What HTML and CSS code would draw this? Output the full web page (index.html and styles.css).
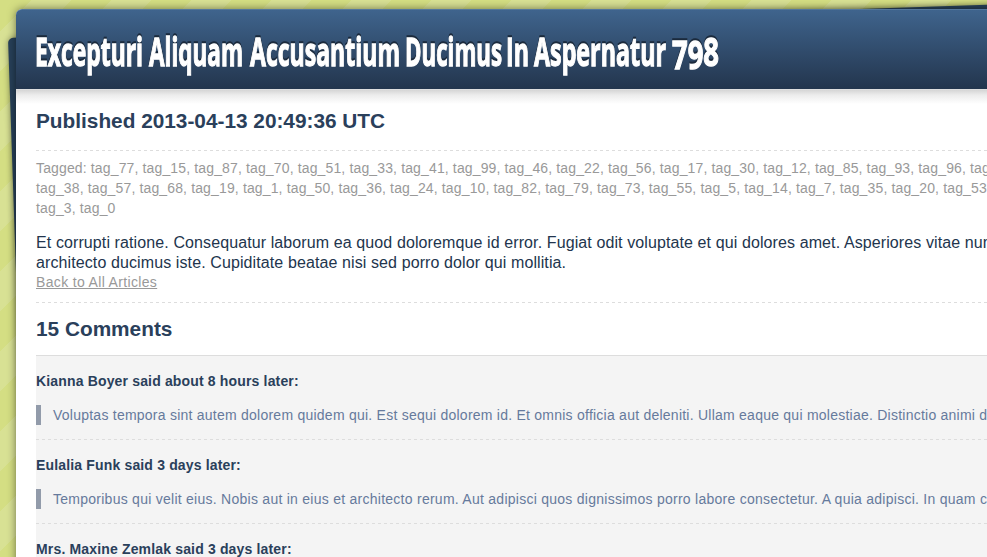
FILE: index.html
```html
<!DOCTYPE html>
<html lang="en">
<head>
<meta charset="utf-8">
<title>Article</title>
<link rel="stylesheet" href="styles.css">
</head>
<body>
<div class="page">
  <div class="backdrop"></div>
  <main class="sheet">
    <header class="banner">
      <h1>
        <svg class="title" width="700" height="60" viewBox="35 20 700 60">
          <text y="65"><tspan x="35" textLength="108" lengthAdjust="spacingAndGlyphs">Excepturi</tspan> <tspan x="149" textLength="94" lengthAdjust="spacingAndGlyphs">Aliquam</tspan> <tspan x="250" textLength="150" lengthAdjust="spacingAndGlyphs">Accusantium</tspan> <tspan x="405" textLength="97" lengthAdjust="spacingAndGlyphs">Ducimus</tspan> <tspan x="506" textLength="23" lengthAdjust="spacingAndGlyphs">In</tspan> <tspan x="534" textLength="132" lengthAdjust="spacingAndGlyphs">Aspernatur</tspan> <tspan x="672" y="68" textLength="47" lengthAdjust="spacingAndGlyphs">79<tspan dy="-3">8</tspan></tspan></text>
        </svg>
      </h1>
    </header>
    <article class="content">
      <h2 class="published">Published 2013-04-13 20:49:36 UTC</h2>
      <p class="tags">Tagged: tag_77, tag_15, tag_87, tag_70, tag_51, tag_33, tag_41, tag_99, tag_46, tag_22, tag_56, tag_17, tag_30, tag_12, tag_85, tag_93, tag_96, tag_<br>tag_38, tag_57, tag_68, tag_19, tag_1, tag_50, tag_36, tag_24, tag_10, tag_82, tag_79, tag_73, tag_55, tag_5, tag_14, tag_7, tag_35, tag_20, tag_53,<br>tag_3, tag_0</p>
      <p class="body">Et corrupti ratione. Consequatur laborum ea quod doloremque id error. Fugiat odit voluptate et qui dolores amet. Asperiores vitae num<br>architecto ducimus iste. Cupiditate beatae nisi sed porro dolor qui mollitia.</p>
      <a class="back" href="#">Back to All Articles</a>
      <h2 class="count">15 Comments</h2>
      <section class="comments">
        <div class="comment">
          <h3>Kianna Boyer said about 8 hours later:</h3>
          <blockquote>Voluptas tempora sint autem dolorem quidem qui. Est sequi dolorem id. Et omnis officia aut deleniti. Ullam eaque qui molestiae. Distinctio animi d</blockquote>
        </div>
        <div class="comment">
          <h3>Eulalia Funk said 3 days later:</h3>
          <blockquote class="wide">Temporibus qui velit eius. Nobis aut in eius et architecto rerum. Aut adipisci quos dignissimos porro labore consectetur. A quia adipisci. In quam c</blockquote>
        </div>
        <div class="comment">
          <h3>Mrs. Maxine Zemlak said 3 days later:</h3>
        </div>
      </section>
    </article>
  </main>
</div>
</body>
</html>
```
FILE: styles.css
```css
* { box-sizing: border-box; margin: 0; padding: 0; }
body {
  height: 557px;
  overflow: hidden;
  font-family: "Liberation Sans", Arial, sans-serif;
  font-size: 14px;
  line-height: 20px;
  color: #2a405b;
}
.page {
  position: relative;
  height: 557px;
  padding: 9px 0 0 16px;
  overflow: hidden;
  background: #d4de83 linear-gradient(135deg, #d8e194 25%, #d4de83 25%, #d4de83 50%, #d8e194 50%, #d8e194 75%, #d4de83 75%) 32px 0 / 80px 80px;
}
.backdrop {
  position: absolute;
  left: 8px;
  top: 38px;
  width: 1040px;
  height: 800px;
  border-radius: 5px;
  background: #274059;
  transform: rotate(-1.95deg);
  transform-origin: 0 0;
  box-shadow: 0 0 6px rgba(0, 0, 0, .4);
}
.sheet {
  position: relative;
  width: 1040px;
  height: 900px;
  background: #fff;
  border-radius: 6px 6px 0 0;
  box-shadow: 0 0 8px rgba(0, 0, 0, .5);
}
.banner {
  height: 80px;
  padding: 11px 0 0 19px;
  border-top: 1px solid #54779d;
  border-radius: 6px 6px 0 0;
  background: linear-gradient(#3f648d, #23354d);
}
.banner h1 { height: 60px; line-height: 0; }
.title {
  overflow: visible;
  font-family: "Open Sans", sans-serif;
  font-size: 38.5px;
  font-weight: 700;
  fill: #fff;
  stroke: #fff;
  stroke-width: 1.3px;
  filter: drop-shadow(0 -2px 0 #1b2a3c);
}
.content {
  height: 800px;
  padding: 19px 20px 0;
  background: linear-gradient(#e9e9e9 0, #d5d5d5 1px, #ececec 6px, #fff 15px) 0 0 / 100% 15px no-repeat;
  white-space: nowrap;
}
h2 { font-size: 20.8px; line-height: 26px; }
.published { height: 42px; }
.tags {
  height: 77px;
  padding-top: 8px;
  color: #999;
  letter-spacing: .14px;
}
.tags, .count {
  background: repeating-linear-gradient(90deg, #ddd 0 3px, transparent 3px 6px) 0 0 / 100% 1px no-repeat;
}
.body {
  margin-top: 6px;
  font-size: 16px;
  color: #22354d;
  letter-spacing: .105px;
}
.back { display: block; height: 29px; line-height: 18px; color: #999; text-decoration: underline; letter-spacing: .34px; }
.count { height: 53px; padding-top: 14px; }
.comments {
  border-top: 1px solid #ddd;
  background: #f4f4f4;
}
.comment {
  height: 84px;
  padding-top: 15px;
  background: repeating-linear-gradient(90deg, #ddd 0 3px, transparent 3px 6px) 0 100% / 100% 1px no-repeat;
}
.comment h3 { font-size: 14px; line-height: 20px; letter-spacing: .16px; }
blockquote {
  margin-top: 14px;
  padding-left: 12px;
  border-left: 5px solid #929baa;
  color: #667a9c;
  letter-spacing: .24px;
}
.wide { letter-spacing: .26px; }
```
